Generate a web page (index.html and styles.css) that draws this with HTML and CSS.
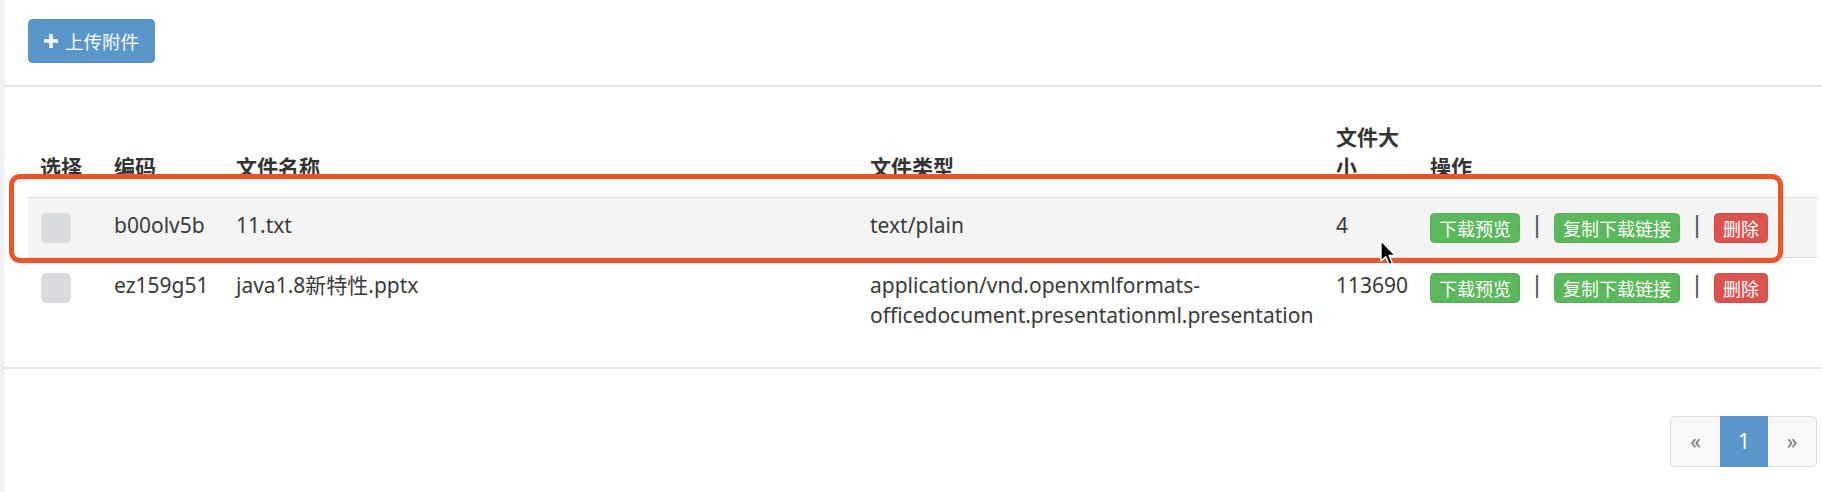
FILE: index.html
```html
<!DOCTYPE html>
<html lang="zh-CN">
<head>
<meta charset="utf-8">
<title>附件管理</title>
<link rel="stylesheet" href="styles.css">
</head>
<body>
<div class="box">
  <div class="box-header">
    <button class="btn btn-primary btn-sm" type="button">
      <svg class="plus" viewBox="0 0 14 14" width="14" height="14"><path d="M5.3 0h3.4v5.3H14v3.4H8.7V14H5.3V8.7H0V5.3h5.3z" fill="#fff"/></svg>
      <span>上传附件</span>
    </button>
  </div>
  <div class="box-body">
    <table class="table">
      <colgroup>
        <col class="c-sel"><col class="c-code"><col class="c-name"><col class="c-type"><col class="c-size"><col class="c-ops">
      </colgroup>
      <thead>
        <tr><th>选择</th><th>编码</th><th>文件名称</th><th>文件类型</th><th>文件大小</th><th>操作</th></tr>
      </thead>
      <tbody>
        <tr class="hover">
          <td><span class="chk"></span></td>
          <td>b00olv5b</td>
          <td>11.txt</td>
          <td>text/plain</td>
          <td>4</td>
          <td><div class="ops"><span class="btn btn-xs btn-success">下载预览</span><span class="sep">|</span><span class="btn btn-xs btn-success">复制下载链接</span><span class="sep">|</span><span class="btn btn-xs btn-danger">删除</span></div></td>
        </tr>
        <tr>
          <td><span class="chk"></span></td>
          <td>ez159g51</td>
          <td>java1.8新特性.pptx</td>
          <td>application/vnd.openxmlformats-officedocument.presentationml.presentation</td>
          <td>113690</td>
          <td><div class="ops"><span class="btn btn-xs btn-success">下载预览</span><span class="sep">|</span><span class="btn btn-xs btn-success">复制下载链接</span><span class="sep">|</span><span class="btn btn-xs btn-danger">删除</span></div></td>
        </tr>
      </tbody>
    </table>
  </div>
  <div class="box-footer">
    <ul class="pagination">
      <li class="pg-prev"><a>«</a></li>
      <li class="pg-num active"><a>1</a></li>
      <li class="pg-next"><a>»</a></li>
    </ul>
  </div>
</div>
<div class="annotation"></div>
<svg class="cursor" viewBox="0 0 16 24" width="19" height="28"><path d="M1.5 1.5 L1.5 19 L5.6 15.2 L8.6 22 L11.4 20.8 L8.5 14.2 L14 14.2 Z" fill="#000" stroke="#fff" stroke-width="1.3" stroke-linejoin="round"/></svg>
</body>
</html>
```
FILE: styles.css
```css
html, body {
  margin: 0;
  padding: 0;
}
body {
  position: relative;
  background: #eef0f3;
  font-family: "Noto Sans", "Noto Sans CJK SC", sans-serif;
  font-size: 21px;
  line-height: 30px;
  color: #333;
  height: 492px;
  overflow: hidden;
}
.box {
  margin-left: 5px;
  background: #fff;
  height: 492px;
}
.box-header {
  padding: 19px 23px 22px;
  border-bottom: 2px solid #e3e3e3;
}
.btn {
  display: inline-flex;
  align-items: center;
  box-sizing: border-box;
  font-family: "Noto Sans CJK SC", "Noto Sans", sans-serif;
  color: #fff;
  border: 1px solid transparent;
  cursor: pointer;
}
.btn-sm {
  height: 44px;
  width: 127px;
  padding: 0 15px;
  font-size: 18.5px;
  border-radius: 4.5px;
}
.btn-primary {
  background: #5a96c9;
  border-color: #5590c3;
}
.plus {
  margin-right: 7px;
  flex: none;
}
.box-body {
  padding: 23px 5px 25px 23px;
}
.table {
  width: 1789px;
  table-layout: fixed;
  border-collapse: separate;
  border-spacing: 0;
}
.c-sel { width: 74px; }
.c-code { width: 122px; }
.c-name { width: 634px; }
.c-type { width: 466px; }
.c-size { width: 94px; }
.c-ops { width: 399px; }
.table th {
  text-align: left;
  vertical-align: bottom;
  font-weight: 700;
  padding: 12px 12px 15px;
  color: #333;
}
.table td {
  vertical-align: top;
  padding: 12px;
  border-top: 1px solid #dedede;
  color: #3a3a3a;
}
.table tr.hover td {
  background: #f4f4f4;
}
.chk {
  display: block;
  width: 30px;
  height: 30px;
  margin: 3px 0 2px 1px;
  background: #d8dcdf;
  border-radius: 5px;
}
.ops {
  display: flex;
  align-items: flex-start;
}
.btn-xs {
  height: 30px;
  margin-top: 3px;
  padding: 0 8px;
  font-size: 18px;
  line-height: 28px;
  border-radius: 4.5px;
}
.btn-success {
  background: #5cb85c;
  border-color: #56b056;
}
.btn-danger {
  background: #d9534f;
  border-color: #d24b47;
}
.sep {
  width: 34px;
  text-align: center;
  color: #555;
  font-family: "Liberation Sans", sans-serif;
  font-size: 23px;
}
.box-footer {
  border-top: 2px solid #e3e3e3;
  padding: 47px 5px 0 23px;
  display: flex;
  justify-content: flex-end;
}
.pagination {
  display: flex;
  margin: 0;
  padding: 0;
  list-style: none;
}
.pagination a {
  display: block;
  box-sizing: border-box;
  height: 51px;
  line-height: 48px;
  text-align: center;
  border: 1px solid #dddddd;
  background: #f8f8f8;
  color: #777;
}
.pg-prev a {
  width: 51px;
  font-size: 21px;
  border-radius: 4.5px 0 0 4.5px;
}
.pg-next a {
  width: 50px;
  font-size: 21px;
  border-radius: 0 4.5px 4.5px 0;
  margin-left: -1px;
}
.pg-num a {
  width: 48px;
  margin-left: -1px;
  font-size: 21px;
  line-height: 49px;
}
.pagination .active a {
  background: #5a96c9;
  border-color: #5a96c9;
  color: #fff;
  position: relative;
  z-index: 1;
}
.annotation {
  position: absolute;
  left: 9px;
  top: 174px;
  width: 1774px;
  height: 89px;
  box-sizing: border-box;
  border: 5px solid #ec5528;
  border-radius: 11px;
  pointer-events: none;
}
.cursor {
  position: absolute;
  left: 1379px;
  top: 239px;
}
```
